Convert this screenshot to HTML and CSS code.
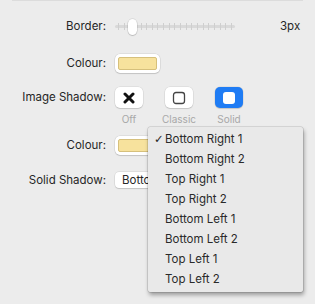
FILE: index.html
```html
<!DOCTYPE html>
<html lang="en">

<head>
    <meta charset="UTF-8">
    <meta name="viewport" content="width=device-width, initial-scale=1.0">
    <link rel="stylesheet" href="styles.css">
    <title>Shadow Settings</title>
</head>

<body>
    <div class="panel">
        <!-- Border width -->
        <div class="row row-border">
            <span class="label">Border:</span>
            <div class="slider">
                <div class="track"></div>
                <div class="ticks">
                    <i></i><i></i><i></i><i></i><i></i><i></i><i></i>
                    <i></i><i></i><i></i><i></i><i></i><i></i><i></i>
                    <i></i><i></i><i></i><i></i><i></i><i></i><i></i>
                </div>
                <div class="thumb"></div>
            </div>
            <span class="value">3px</span>
        </div>

        <div class="row row-colour">
            <span class="label">Colour:</span>
            <div class="swatch"><div class="swatch-fill"></div></div>
        </div>

        <!-- Image shadow style -->
        <div class="row row-shadow">
            <span class="label">Image Shadow:</span>
            <div class="choices">
                <div class="choice">
                    <div class="choice-btn">
                        <svg width="12" height="12" viewBox="0 0 12 12">
                            <path d="M2 2 L10 10 M10 2 L2 10" stroke="#111" stroke-width="3" stroke-linecap="round" />
                        </svg>
                    </div>
                    <span class="caption">Off</span>
                </div>
                <div class="choice">
                    <div class="choice-btn">
                        <svg width="14" height="14" viewBox="0 0 14 14">
                            <rect x="1.5" y="1.5" width="11" height="11" rx="2.5" fill="none" stroke="#444" stroke-width="1.3" />
                        </svg>
                    </div>
                    <span class="caption">Classic</span>
                </div>
                <div class="choice">
                    <div class="choice-btn selected">
                        <svg width="14" height="14" viewBox="0 0 14 14">
                            <rect x="1" y="1" width="12" height="12" rx="3" fill="#fff" />
                        </svg>
                    </div>
                    <span class="caption">Solid</span>
                </div>
            </div>
        </div>

        <div class="row row-colour2">
            <span class="label">Colour:</span>
            <div class="swatch"><div class="swatch-fill"></div></div>
        </div>

        <div class="row row-solid">
            <span class="label">Solid Shadow:</span>
            <div class="popup"><span>Botto</span></div>
        </div>

        <!-- Open popup menu -->
        <ul class="menu">
            <li class="checked">Bottom Right 1</li>
            <li>Bottom Right 2</li>
            <li>Top Right 1</li>
            <li>Top Right 2</li>
            <li>Bottom Left 1</li>
            <li>Bottom Left 2</li>
            <li>Top Left 1</li>
            <li>Top Left 2</li>
        </ul>
    </div>
</body>

</html>
```

FILE: styles.css
```css
body {
    margin: 0;
    padding: 0;
    background-color: #ececec;
    font-family: 'Inter', 'Liberation Sans', sans-serif;
    font-size: 11.5px;
    color: #262626;
}

.panel {
    position: relative;
    width: 315px;
    height: 304px;
    overflow: hidden;
}

.panel::before {
    content: "";
    display: block;
    margin: 0 12px 0 12px;
    height: 1px;
    background-color: #dcdcdc;
}

.row {
    display: flex;
    align-items: center;
}

.label {
    width: 106px;
    text-align: right;
    margin-right: 9px;
    flex-shrink: 0;
}

.row-border {
    margin-top: 15px;
    height: 20px;
}

.slider {
    position: relative;
    width: 120px;
    height: 20px;
}

.track {
    position: absolute;
    left: 0;
    right: 0;
    top: 9px;
    height: 3px;
    border-radius: 2px;
    background-color: #d9d9d9;
}

.ticks {
    position: absolute;
    left: 3px;
    right: 3px;
    top: 7px;
    height: 7px;
    display: flex;
    justify-content: space-between;
}

.ticks i {
    width: 1px;
    background-color: #cfcfcf;
}

.thumb {
    position: absolute;
    left: 13px;
    top: 3px;
    width: 9px;
    height: 16px;
    border-radius: 5px;
    background-color: #fff;
    box-shadow: 0 0 0 0.5px rgba(0, 0, 0, 0.15), 0 1px 1px rgba(0, 0, 0, 0.15);
}

.value {
    margin-left: 45px;
}

.row-colour {
    margin-top: 17px;
    height: 20px;
}

.swatch {
    width: 45px;
    height: 19px;
    box-sizing: border-box;
    padding: 3px 3px 3px 3px;
    border-radius: 5px;
    background-color: #fff;
    box-shadow: 0 0 0 0.5px rgba(0, 0, 0, 0.12), 0 1px 1px rgba(0, 0, 0, 0.12);
}

.swatch-fill {
    height: 100%;
    box-sizing: border-box;
    border: 1px solid #d6c07c;
    border-radius: 2px;
    background-color: #f7e29d;
}

.row-shadow {
    margin-top: 14px;
    align-items: flex-start;
}

.row-shadow .label {
    line-height: 21px;
}

.choices {
    display: flex;
    gap: 22px;
}

.choice {
    display: flex;
    flex-direction: column;
    align-items: center;
    width: 28px;
}

.choice-btn {
    width: 28px;
    height: 21px;
    border-radius: 5px;
    background-color: #fff;
    display: flex;
    align-items: center;
    justify-content: center;
    box-shadow: 0 0 0 0.5px rgba(0, 0, 0, 0.1), 0 1px 1px rgba(0, 0, 0, 0.12);
}

.choice-btn.selected {
    background-color: #1f7cf4;
}

.caption {
    margin-top: 5px;
    font-size: 10px;
    color: #a8a8a8;
}

.row-colour2 {
    margin-top: 10px;
    height: 20px;
}

.row-solid {
    margin-top: 16px;
    height: 17px;
}

.popup {
    width: 33px;
    height: 16px;
    line-height: 16px;
    padding-left: 7px;
    border-radius: 4px 0 0 4px;
    background-color: #fff;
    box-shadow: 0 0 0 0.5px rgba(0, 0, 0, 0.12), 0 1px 1px rgba(0, 0, 0, 0.12);
    white-space: nowrap;
    overflow: hidden;
    box-sizing: border-box;
}

.menu {
    position: absolute;
    left: 148px;
    top: 127px;
    width: 155px;
    margin: 0;
    padding: 2px 0 3px 0;
    list-style: none;
    background-color: #e9e9e9;
    border-radius: 2px;
    box-shadow: 0 0 0 0.5px rgba(0, 0, 0, 0.18), 1px 3px 4px rgba(0, 0, 0, 0.35);
}

.menu li {
    height: 20px;
    line-height: 20px;
    padding-left: 17px;
    font-size: 11.5px;
    color: #2a2a2a;
}

.menu li.checked::before {
    content: "\2713";
    display: inline-block;
    width: 0;
    margin-left: -11px;
    margin-right: 11px;
    font-family: 'DejaVu Sans', sans-serif;
}
```
